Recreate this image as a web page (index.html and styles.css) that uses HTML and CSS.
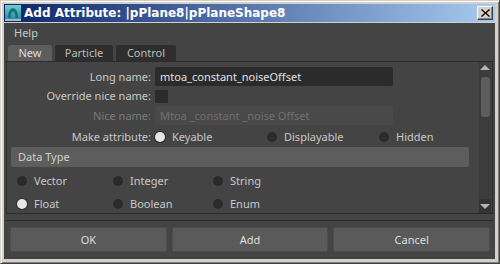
FILE: index.html
```html
<!DOCTYPE html>
<html lang="en">

<head>
    <meta charset="UTF-8">
    <title>Add Attribute</title>
    <link rel="stylesheet" href="styles.css">
</head>

<body>
    <div class="window">
        <div class="titlebar">
            <svg class="app-icon" width="16" height="16" viewBox="0 0 16 16">
                <defs>
                    <linearGradient id="ig" x1="0" y1="0" x2="0" y2="1">
                        <stop offset="0" stop-color="#6fd0cc"/>
                        <stop offset="1" stop-color="#1f8597"/>
                    </linearGradient>
                </defs>
                <rect x="0" y="0" width="16" height="16" fill="url(#ig)"/>
                <path d="M3 13 Q3 4 8 3 Q13 4 13 13 L10.5 13 Q10.5 7 8 6.5 Q5.5 7 5.5 13 Z" fill="#17707f"/>
                <rect x="0" y="14" width="16" height="2" fill="#aeb9c2"/>
            </svg>
            <span class="title">Add Attribute: |pPlane8|pPlaneShape8</span>
            <button class="close">
                <svg width="9" height="8" viewBox="0 0 9 8">
                    <path d="M1 0 L4.5 3.2 L8 0 L9 1 L5.5 4 L9 7 L8 8 L4.5 4.8 L1 8 L0 7 L3.5 4 L0 1 Z" fill="#000"/>
                </svg>
            </button>
        </div>

        <div class="body">
            <div class="menubar"><span>Help</span></div>

            <div class="tabs">
                <div class="tab active">New</div>
                <div class="tab">Particle</div>
                <div class="tab">Control</div>
            </div>

            <div class="panel">
                <div class="panel-content">
                    <div class="form">
                        <label>Long name:</label>
                        <div class="field">mtoa_constant_noiseOffset</div>

                        <label>Override nice name:</label>
                        <div><span class="checkbox"></span></div>

                        <label class="disabled">Nice name:</label>
                        <div class="field off">Mtoa _constant _noise Offset</div>

                        <label>Make attribute:</label>
                        <div class="radios wide">
                            <span class="radio on">Keyable</span>
                            <span class="radio">Displayable</span>
                            <span class="radio">Hidden</span>
                        </div>
                    </div>

                    <div class="section">Data Type</div>
                    <div class="radio-grid">
                        <span class="radio">Vector</span>
                        <span class="radio">Integer</span>
                        <span class="radio">String</span>
                        <span class="radio on">Float</span>
                        <span class="radio">Boolean</span>
                        <span class="radio">Enum</span>
                    </div>
                </div>

                <div class="scrollbar">
                    <span class="arrow up"></span>
                    <span class="thumb"></span>
                    <span class="arrow-box"><span class="arrow down"></span></span>
                </div>
            </div>

            <div class="separator"></div>

            <div class="buttons">
                <button>OK</button>
                <button>Add</button>
                <button>Cancel</button>
            </div>
        </div>
    </div>
</body>

</html>
```

FILE: styles.css
```css
* {
    box-sizing: border-box;
    margin: 0;
}

body {
    width: 500px;
    height: 264px;
    overflow: hidden;
    background-color: #d4d0c8;
    font-family: "Noto Sans", sans-serif;
    font-size: 11px;
}

.window {
    width: 500px;
    height: 264px;
    display: flex;
    flex-direction: column;
    background-color: #d4d0c8;
    border-top: 1px solid #d4d0c8;
    border-left: 1px solid #d4d0c8;
    border-right: 1px solid #404040;
    border-bottom: 1px solid #404040;
    padding: 3px 4px 4px 3px;
    box-shadow: inset 1px 1px 0 #ffffff, inset -1px -1px 0 #808080;
}

.titlebar {
    height: 18px;
    display: flex;
    align-items: center;
    padding: 0 2px 0 1px;
    background: linear-gradient(to right, #0a246a, #a6caf0);
    color: #fff;
    flex-shrink: 0;
}

.app-icon {
    margin-right: 3px;
}

.title {
    font-family: "DejaVu Sans", sans-serif;
    font-weight: bold;
    font-size: 12px;
    flex: 1;
    white-space: nowrap;
}

.close {
    width: 16px;
    height: 14px;
    padding: 0;
    display: flex;
    align-items: center;
    justify-content: center;
    background-color: #d4d0c8;
    border: 1px solid;
    border-color: #ffffff #404040 #404040 #ffffff;
    box-shadow: inset -1px -1px 0 #808080;
}

.body {
    flex: 1;
    display: flex;
    flex-direction: column;
    background-color: #444444;
    border-top: 1px solid #d4d0c8;
    padding: 0 2px 5px 2px;
    color: #c8c8c8;
}

.menubar {
    height: 22px;
    line-height: 20px;
    padding-left: 8px;
}

.tabs {
    display: flex;
    gap: 3px;
    padding-left: 2px;
    height: 16px;
}

.tab {
    line-height: 16px;
    text-align: center;
    background-color: #2e2e2e;
    color: #bdbdbd;
    border-radius: 2px 2px 0 0;
}

.tab.active {
    width: 44px;
    background-color: #5d5d5d;
    color: #dedede;
}

.tab:nth-child(2) {
    width: 58px;
}

.tab:nth-child(3) {
    width: 60px;
}

.panel {
    height: 153px;
    display: flex;
    border: 1px solid #2b2b2b;
    overflow: hidden;
}

.panel-content {
    flex: 1;
    overflow: hidden;
}

.form {
    display: grid;
    grid-template-columns: 144px 1fr;
    column-gap: 4px;
    row-gap: 3px;
    padding-top: 5px;
    align-items: center;
}

.form label {
    text-align: right;
    color: #c8c8c8;
    line-height: 14px;
}

.form label.disabled {
    color: #7a7a7a;
}

.field {
    width: 238px;
    height: 19px;
    line-height: 19px;
    padding-left: 5px;
    background-color: #2b2b2b;
    color: #e2e2e2;
    border-radius: 2px;
}

.field.off {
    background-color: #494949;
    color: #707070;
}

.checkbox {
    display: block;
    width: 13px;
    height: 13px;
    background-color: #2b2b2b;
    border-radius: 1px;
}

.radios {
    display: flex;
    height: 18px;
    align-items: center;
}

.radio {
    display: flex;
    align-items: center;
    gap: 7px;
    color: #c8c8c8;
    line-height: 14px;
}

.radio::before {
    content: "";
    width: 10px;
    height: 10px;
    border-radius: 50%;
    background-color: #2b2b2b;
}

.radio.on::before {
    background-color: #e6e6e6;
    box-shadow: 0 0 0 1px #2b2b2b;
}

.radios.wide .radio {
    width: 112px;
}

.section {
    margin: 1px 10px 0 4px;
    height: 20px;
    line-height: 20px;
    padding-left: 7px;
    background-color: #5d5d5d;
    color: #cfcfcf;
    border-radius: 2px;
}

.radio-grid {
    display: grid;
    grid-template-columns: 96px 100px 100px;
    row-gap: 9px;
    padding: 7px 0 0 10px;
}

.radio-grid .radio {
    height: 14px;
}

.scrollbar {
    width: 12px;
    margin-right: 1px;
    display: flex;
    flex-direction: column;
    align-items: center;
    background-color: #3c3c3c;
}

.arrow {
    width: 0;
    height: 0;
    border-left: 5px solid transparent;
    border-right: 5px solid transparent;
}

.arrow.up {
    margin-top: 3px;
    border-bottom: 5px solid #b4b4b4;
}

.arrow-box {
    margin-top: auto;
    width: 12px;
    height: 14px;
    display: flex;
    align-items: center;
    justify-content: center;
    background-color: #333333;
}

.arrow.down {
    border-top: 5px solid #b4b4b4;
}

.thumb {
    width: 9px;
    height: 40px;
    margin-top: 7px;
    border-radius: 3px;
    background-color: #5d5d5d;
}

.separator {
    height: 1px;
    margin-top: 6px;
    background-color: #2b2b2b;
}

.buttons {
    display: flex;
    gap: 5px;
    padding: 6px 3px 0 4px;
}

.buttons button {
    flex: 1;
    height: 25px;
    background-color: #5a5a5a;
    border: 1px solid #4d4d4d;
    border-radius: 2px;
    color: #dedede;
    font-family: "Noto Sans", sans-serif;
    font-size: 11px;
}
```
